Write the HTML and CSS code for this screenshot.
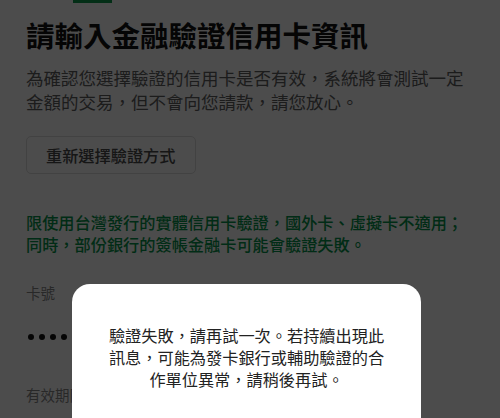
FILE: index.html
```html
<!DOCTYPE html>
<html lang="zh-Hant">
<head>
<meta charset="utf-8">
<title>金融驗證</title>
<link rel="stylesheet" href="styles.css">
</head>
<body>
<div class="page">
  <div class="stepbar"><span class="step-active"></span></div>
  <main class="content">
    <h1 class="title">請輸入金融驗證信用卡資訊</h1>
    <p class="desc">為確認您選擇驗證的信用卡是否有效，系統將會測試一定金額的交易，但不會向您請款，請您放心。</p>
    <button class="btn-outline" type="button">重新選擇驗證方式</button>
    <p class="notice">限使用台灣發行的實體信用卡驗證，國外卡、虛擬卡不適用；同時，部份銀行的簽帳金融卡可能會驗證失敗。</p>
    <div class="field">
      <div class="field-label">卡號</div>
      <div class="field-value masked" aria-label="••••"><span class="dot"></span><span class="dot"></span><span class="dot"></span><span class="dot"></span></div>
    </div>
    <div class="field field-expiry">
      <div class="field-label">有效期限</div>
    </div>
  </main>
</div>
<div class="overlay">
  <div class="dialog">
    <p class="dialog-msg">驗證失敗，請再試一次。若持續出現此訊息，可能為發卡銀行或輔助驗證的合作單位異常，請稍後再試。</p>
  </div>
</div>
</body>
</html>
```

FILE: styles.css
```css
* { box-sizing: border-box; }
html, body { margin: 0; padding: 0; }
body {
  width: 500px;
  height: 418px;
  overflow: hidden;
  background: #ffffff;
  font-family: "Noto Sans CJK TC", "Noto Sans", sans-serif;
  color: #111;
  position: relative;
}
.page {
  height: 418px;
  overflow: hidden;
}
.stepbar {
  height: 3px;
  display: flex;
  padding-left: 73px;
}
.step-active {
  width: 39px;
  height: 3px;
  background: #0a9a4a;
}
.content {
  padding: 0 26px;
}
.title {
  margin: 14px 0 0;
  font-size: 28.5px;
  line-height: 36px;
  font-weight: 700;
  color: #111;
}
.desc {
  margin: 13px 0 0;
  font-size: 17.5px;
  line-height: 24px;
  color: #5e5e5e;
}
.btn-outline {
  display: block;
  margin-top: 22px;
  height: 38px;
  padding: 0 19px;
  background: #fff;
  border: 1px solid #dcdcdc;
  border-radius: 5px;
  font-family: inherit;
  font-size: 16.2px;
  font-weight: 500;
  color: #4a4a4a;
}
.notice {
  margin: 37px 0 0;
  font-size: 16.2px;
  line-height: 22px;
  color: #05934a;
  font-weight: 500;
}
.field {
  margin-top: 28px;
}
.field-expiry {
  margin-top: 36px;
}
.field-label {
  font-size: 14.5px;
  line-height: 20px;
  color: #888;
}
.field-value {
  margin-top: 22px;
  height: 24px;
  display: flex;
  align-items: center;
  gap: 5px;
  padding-left: 2px;
}
.dot {
  width: 6px;
  height: 6px;
  border-radius: 50%;
  background: #111;
}
.overlay {
  position: absolute;
  inset: 0;
  background: rgba(0, 0, 0, 0.7);
  padding: 284px 0 0 72px;
}
.dialog {
  width: 349px;
  height: 134px;
  background: #fff;
  border-radius: 18px 18px 0 0;
  padding: 40px 36px 0;
}
.dialog-msg {
  margin: 0;
  font-size: 16.2px;
  line-height: 22px;
  text-align: center;
  color: #222;
}
```
